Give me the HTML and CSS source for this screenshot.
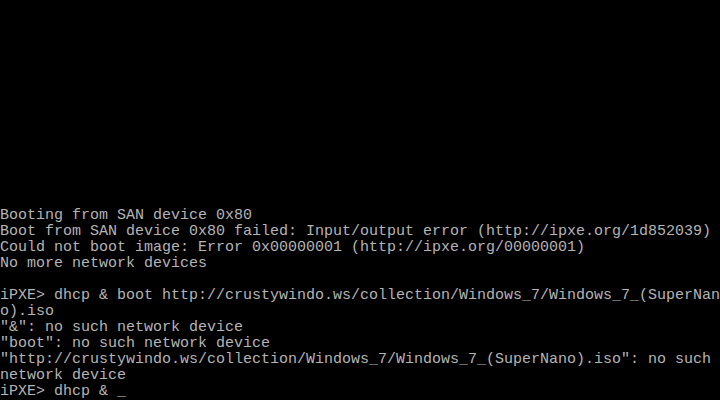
FILE: index.html
```html
<!DOCTYPE html>
<html>
<head>
<meta charset="utf-8">
<link rel="stylesheet" href="styles.css">
</head>
<body>
<div class="screen">
<pre class="console">Booting from SAN device 0x80
Boot from SAN device 0x80 failed: Input/output error (http://ipxe.org/1d852039)
Could not boot image: Error 0x00000001 (http://ipxe.org/00000001)
No more network devices

iPXE&gt; dhcp &amp; boot http://crustywindo.ws/collection/Windows_7/Windows_7_(SuperNano
o).iso
"&amp;": no such network device
"boot": no such network device
"http://crustywindo.ws/collection/Windows_7/Windows_7_(SuperNano).iso": no such
network device
iPXE&gt; dhcp &amp; <span class="cursor">_</span></pre>
</div>
</body>
</html>
```
FILE: styles.css
```css
html, body {
  margin: 0;
  padding: 0;
  background: #000;
}
.screen {
  width: 720px;
  height: 400px;
  display: flex;
  flex-direction: column;
  justify-content: flex-end;
  overflow: hidden;
  background: #000;
}
.console {
  margin: 0;
  font-family: "Liberation Mono", "DejaVu Sans Mono", monospace;
  font-size: 15px;
  line-height: 16px;
  color: #b4b4b4;
  white-space: pre;
}
.cursor {
  color: #c8c8c8;
}
```
